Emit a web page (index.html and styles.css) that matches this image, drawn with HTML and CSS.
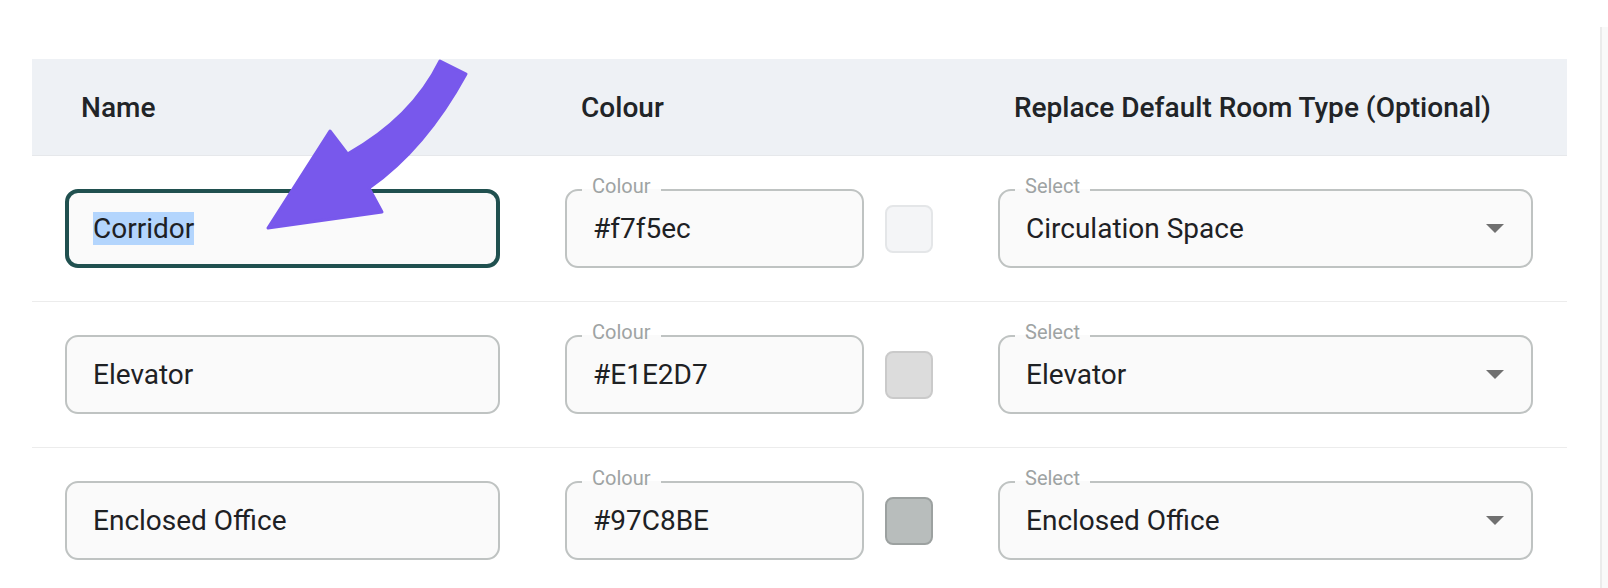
FILE: index.html
```html
<!DOCTYPE html>
<html>
<head>
<meta charset="utf-8">
<link rel="stylesheet" href="styles.css">
</head>
<body>
<div class="page">
  <div class="table">
    <div class="thead">
      <div class="th col-name">Name</div>
      <div class="th col-colour">Colour</div>
      <div class="th col-type">Replace Default Room Type (Optional)</div>
    </div>

    <div class="row">
      <div class="field name-field focused"><span class="sel">Corridor</span></div>
      <div class="colour-cell">
        <div class="field colour-field"><span class="label">Colour</span>#f7f5ec</div>
        <div class="swatch sw-light"></div>
      </div>
      <div class="field select-field"><span class="label">Select</span><span class="value">Circulation Space</span><svg class="caret" viewBox="0 0 18 9"><path d="M0 0H18L9 9Z"/></svg></div>
    </div>

    <div class="row">
      <div class="field name-field">Elevator</div>
      <div class="colour-cell">
        <div class="field colour-field"><span class="label">Colour</span>#E1E2D7</div>
        <div class="swatch sw-mid"></div>
      </div>
      <div class="field select-field"><span class="label">Select</span><span class="value">Elevator</span><svg class="caret" viewBox="0 0 18 9"><path d="M0 0H18L9 9Z"/></svg></div>
    </div>

    <div class="row">
      <div class="field name-field">Enclosed Office</div>
      <div class="colour-cell">
        <div class="field colour-field"><span class="label">Colour</span>#97C8BE</div>
        <div class="swatch sw-dark"></div>
      </div>
      <div class="field select-field"><span class="label">Select</span><span class="value">Enclosed Office</span><svg class="caret" viewBox="0 0 18 9"><path d="M0 0H18L9 9Z"/></svg></div>
    </div>
  </div>
  <div class="side"></div>
</div>

<svg class="arrow" viewBox="0 0 1608 588" width="1608" height="588">
  <path d="M440 61 L466 74 Q425 149 369 188 L382 212 L268 228 L330 131 L347.5 154 Q412 118 440 61 Z"/>
</svg>
</body>
</html>
```

FILE: styles.css
```css
* { box-sizing: border-box; }
html, body { margin: 0; padding: 0; background: #ffffff; }
body {
  font-family: Roboto, "Liberation Sans", sans-serif;
  color: #1e2124;
  width: 1608px;
  height: 588px;
  overflow: hidden;
  position: relative;
}
.page {
  display: flex;
  align-items: flex-start;
  padding: 27px 0 0 32px;
  height: 588px;
}
.table {
  width: 1535px;
  margin-top: 32px;
  flex: none;
}
.side {
  margin-left: 33px;
  flex: 1;
  align-self: stretch;
  border-left: 2px solid #ebebeb;
  background: #f9f9f9;
}
.thead {
  display: flex;
  align-items: center;
  height: 97px;
  padding-left: 33px;
  background: #eef1f5;
  border-bottom: 1px solid #e6e8eb;
}
.th {
  font-family: "Roboto Medium", Roboto, "Liberation Sans", sans-serif;
  font-size: 28px;
  font-weight: 500;
  color: #212427;
  padding-left: 16px;
  white-space: nowrap;
}
.col-name { width: 435px; }
.col-colour { width: 368px; margin-left: 65px; }
.col-type { width: 535px; margin-left: 65px; }

.row {
  display: flex;
  align-items: center;
  padding: 33px 0 33px 33px;
  border-bottom: 1px solid #ececec;
}
.field {
  position: relative;
  display: flex;
  align-items: center;
  height: 79px;
  padding-left: 26px;
  border: 2px solid #bfc3c2;
  border-radius: 13px;
  background: #fafafa;
  font-size: 28px;
  color: #1e2124;
  white-space: nowrap;
}
.name-field { width: 435px; }
.focused {
  border: 4px solid #20504f;
  padding-left: 24px;
}
.sel { background: #b3d5fd; }
.colour-cell {
  display: flex;
  align-items: center;
  gap: 21px;
  margin-left: 65px;
}
.colour-field { width: 299px; }
.select-field {
  width: 535px;
  margin-left: 65px;
}
.value { flex: 1; }
.caret {
  width: 18px;
  height: 9px;
  margin-right: 27px;
  fill: #707070;
}
.label {
  position: absolute;
  top: -15px;
  left: 15px;
  padding: 0 10px;
  font-size: 20px;
  line-height: 20px;
  color: #9ea3a3;
  background: linear-gradient(#ffffff 0 13px, #fafafa 13px);
}
.swatch {
  width: 48px;
  height: 48px;
  border-radius: 8px;
  border: 2px solid #dfe1e3;
}
.sw-light { background: #f4f5f7; border-color: #e4e6e8; }
.sw-mid { background: #dcdcdc; border-color: #cacaca; }
.sw-dark { background: #b8bdbc; border-color: #9ca1a0; }

.arrow {
  position: absolute;
  left: 0;
  top: 0;
  pointer-events: none;
}
.arrow path {
  fill: #7858ec;
  stroke: #7858ec;
  stroke-width: 3;
  stroke-linejoin: round;
}
```
